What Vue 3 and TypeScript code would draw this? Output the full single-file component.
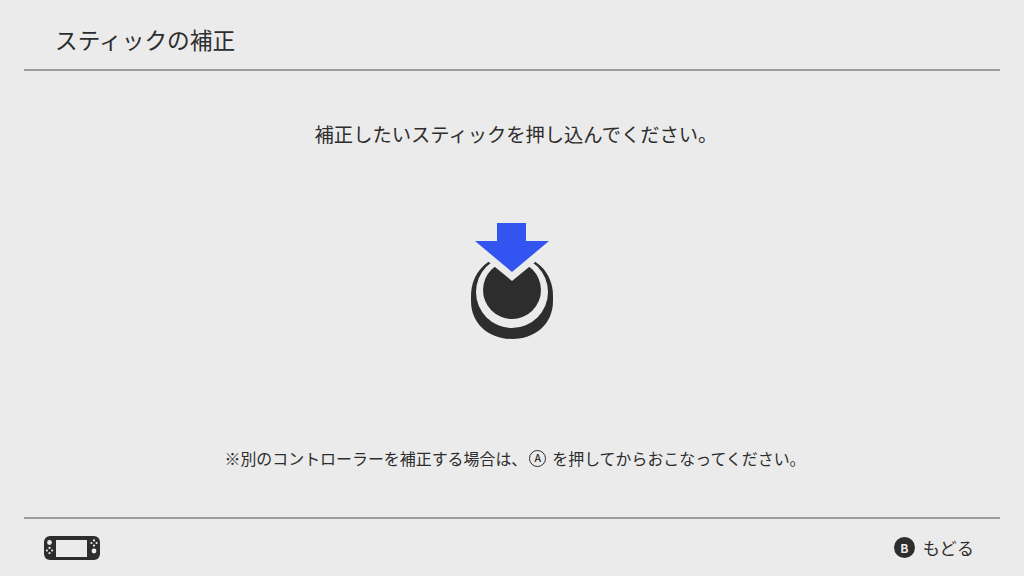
<template>
  <div class="screen">
    <header class="header">
      <h1 class="title">スティックの補正</h1>
    </header>

    <main class="body">
      <p class="message">補正したいスティックを押し込んでください。</p>

      <!-- stick being pushed in -->
      <svg class="stick" width="84" height="120" viewBox="470 221 84 120">
        <path d="M471 296 C471 272 489 255 512 255 C535 255 553 272 553 296 V301 C553 324 535 339 512 339 C489 339 471 324 471 301 Z" fill="#2d2d2d" />
        <ellipse cx="512" cy="292" rx="36" ry="36" fill="#ebebeb" />
        <circle cx="512" cy="290" r="29" fill="#2d2d2d" />
        <polygon points="512,281 462,240 562,240" fill="#ebebeb" />
        <polygon points="497,223 526,223 526,241 549,241 512,272 475,241 497,241" fill="#3254f0" />
      </svg>

      <p class="note">
        ※別のコントローラーを補正する場合は、<span class="glyph-a">A</span>を押してからおこなってください。
      </p>
    </main>

    <footer class="footer">
      <svg class="console" width="56" height="24" viewBox="0 0 56 24">
        <rect width="56" height="24" rx="6" fill="#2d2d2d" />
        <rect x="12" y="4" width="31" height="17" fill="#ebebeb" />
        <circle cx="5.5" cy="6.5" r="2.4" fill="#ebebeb" />
        <circle v-for="d in leftPad" :key="d[0] + '-' + d[1]" :cx="d[0]" :cy="d[1]" r="1.1" fill="#ebebeb" />
        <circle v-for="d in rightPad" :key="d[0] + '-' + d[1]" :cx="d[0]" :cy="d[1]" r="1.1" fill="#ebebeb" />
        <circle cx="50" cy="15" r="2.4" fill="#ebebeb" />
      </svg>
      <div class="back">
        <span class="glyph-b">B</span>
        <span>もどる</span>
      </div>
    </footer>
  </div>
</template>

<script setup lang="ts">
const dots = (x: number, y: number): number[][] => [
  [x, y - 2.6],
  [x - 2.6, y],
  [x + 2.6, y],
  [x, y + 2.6],
];

const leftPad = dots(5.5, 14.5);
const rightPad = dots(50, 7);
</script>

<style scoped>
.screen {
  width: 1024px;
  height: 576px;
  display: flex;
  flex-direction: column;
  background: #ebebeb;
  color: #2d2d2d;
  font-family: "Noto Sans CJK JP", "Noto Sans", sans-serif;
  overflow: hidden;
}

.header {
  height: 71px;
  margin: 0 24px;
  padding: 10px 31px 0;
  box-sizing: border-box;
  display: flex;
  align-items: center;
  border-bottom: 2px solid #9c9c9c;
}

.title {
  margin: 0;
  font-size: 22.7px;
  font-weight: 400;
}

.body {
  flex: 1;
  display: flex;
  flex-direction: column;
  align-items: center;
}

.message {
  margin: 49px 0 0;
  padding-left: 8px;
  font-size: 19.3px;
  line-height: 28px;
}

.stick {
  margin-top: 73px;
  display: block;
}

.note {
  margin: 106px 0 0;
  padding-left: 6px;
  font-size: 15.95px;
  line-height: 22px;
  display: flex;
  align-items: center;
}

.glyph-a {
  width: 17px;
  height: 17px;
  margin: 0 6px 0 2px;
  box-sizing: border-box;
  border: 1.5px solid #2d2d2d;
  border-radius: 50%;
  display: flex;
  align-items: center;
  justify-content: center;
  font-size: 10.5px;
  font-weight: 500;
  line-height: 1;
}

.footer {
  height: 59px;
  margin: 0 24px;
  padding: 0 26px 0 20px;
  box-sizing: border-box;
  display: flex;
  align-items: center;
  justify-content: space-between;
  border-top: 2px solid #9c9c9c;
}

.console {
  display: block;
}

.back {
  display: flex;
  align-items: center;
  gap: 8px;
  font-size: 17.2px;
}

.glyph-b {
  width: 21px;
  height: 21px;
  border-radius: 50%;
  background: #2d2d2d;
  color: #ebebeb;
  display: flex;
  align-items: center;
  justify-content: center;
  font-size: 12px;
  font-weight: 700;
  line-height: 1;
}
</style>
